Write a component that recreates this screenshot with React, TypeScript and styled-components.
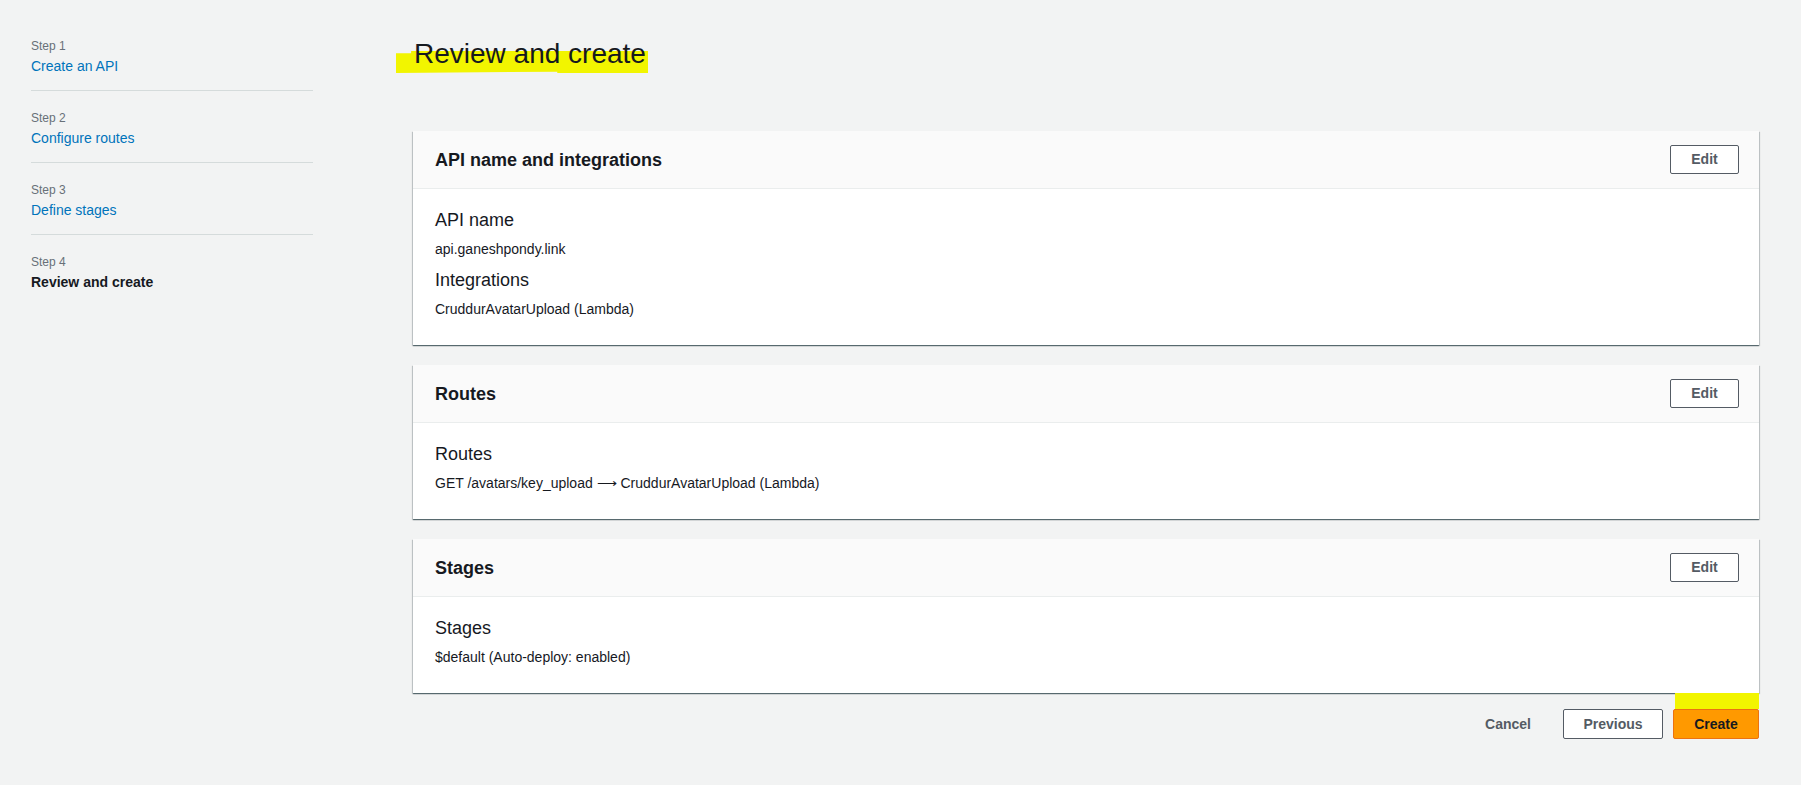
import styled, { createGlobalStyle } from 'styled-components';

const GlobalStyle = createGlobalStyle`
    html, body {
        margin: 0;
        padding: 0;
        background: #f2f3f3;
        font-family: "Liberation Sans", Arial, sans-serif;
        color: #16191f;
    }
`;

interface Step {
    label: string
    title: string
    current?: boolean
}

interface Field {
    label: string
    value: string
}

interface Section {
    title: string
    fields: Field[]
}

const steps: Step[] = [
    { label: 'Step 1', title: 'Create an API' },
    { label: 'Step 2', title: 'Configure routes' },
    { label: 'Step 3', title: 'Define stages' },
    { label: 'Step 4', title: 'Review and create', current: true },
];

const sections: Section[] = [
    {
        title: 'API name and integrations',
        fields: [
            { label: 'API name', value: 'api.ganeshpondy.link' },
            { label: 'Integrations', value: 'CruddurAvatarUpload (Lambda)' },
        ],
    },
    {
        title: 'Routes',
        fields: [{ label: 'Routes', value: 'GET /avatars/key_upload \u27F6 CruddurAvatarUpload (Lambda)' }],
    },
    {
        title: 'Stages',
        fields: [{ label: 'Stages', value: '$default (Auto-deploy: enabled)' }],
    },
];

const App: React.FC = () => {
    return (
        <Page>
            <GlobalStyle />
            <Sidebar>
                {steps.map(step => (
                    <StepItem key={step.label}>
                        <StepLabel>{step.label}</StepLabel>
                        <StepTitle current={step.current}>{step.title}</StepTitle>
                    </StepItem>
                ))}
            </Sidebar>

            <Main>
                <Heading>
                    <Marker />
                    <HeadingText>Review and create</HeadingText>
                </Heading>

                <Cards>
                    {sections.map(section => (
                        <Card key={section.title}>
                            <CardHeader>
                                <CardTitle>{section.title}</CardTitle>
                                <EditButton>Edit</EditButton>
                            </CardHeader>
                            <CardBody>
                                {section.fields.map(field => (
                                    <FieldBlock key={field.label}>
                                        <FieldLabel>{field.label}</FieldLabel>
                                        <FieldValue>{field.value}</FieldValue>
                                    </FieldBlock>
                                ))}
                            </CardBody>
                        </Card>
                    ))}
                </Cards>

                <Actions>
                    <LinkButton>Cancel</LinkButton>
                    <OutlineButton>Previous</OutlineButton>
                    <PrimaryWrap>
                        <ButtonMarker />
                        <PrimaryButton>Create</PrimaryButton>
                    </PrimaryWrap>
                </Actions>
            </Main>
        </Page>
    )
}

const Page = styled.div`
    display: flex;
    align-items: flex-start;
    min-height: 785px;
`;

const Sidebar = styled.ul`
    list-style: none;
    margin: 0 0 0 31px;
    padding: 19px 0 0;
    width: 282px;
    flex-shrink: 0;
`;

const StepItem = styled.li`
    display: flex;
    flex-direction: column;
    gap: 2px;
    padding: 19px 0 14px;
    border-bottom: 1px solid #d5dbdb;

    &:last-child {
        border-bottom: none;
    }
`;

const StepLabel = styled.span`
    font-size: 12px;
    line-height: 16px;
    color: #687078;
`;

const StepTitle = styled.span<{ current?: boolean }>`
    font-size: 14px;
    line-height: 20px;
    color: ${props => props.current ? '#16191f' : '#0073bb'};
    font-weight: ${props => props.current ? 700 : 400};
`;

const Main = styled.div`
    margin-left: 100px;
    width: 1346px;
    padding-top: 36px;
`;

const Heading = styled.div`
    position: relative;
    display: inline-block;
    margin-left: 1px;
`;

const Marker = styled.div`
    position: absolute;
    left: -18px;
    top: 15px;
    width: 252px;
    height: 22px;
    background: #f2f500;
    clip-path: polygon(0 10%, 6% 10%, 6% 0, 100% 0, 100% 100%, 64% 100%, 64% 94%, 0 100%);
`;

const HeadingText = styled.h1`
    position: relative;
    margin: 0;
    font-size: 28px;
    line-height: 36px;
    font-weight: 400;
    color: #16191f;
`;

const Cards = styled.div`
    display: flex;
    flex-direction: column;
    gap: 20px;
    margin-top: 59px;
`;

const Card = styled.section`
    background: #ffffff;
    box-shadow: 0 1px 1px 0 rgba(0, 28, 36, 0.5), 1px 1px 1px 0 rgba(0, 28, 36, 0.15), -1px 1px 1px 0 rgba(0, 28, 36, 0.15);
`;

const CardHeader = styled.div`
    display: flex;
    align-items: center;
    justify-content: space-between;
    height: 57px;
    padding: 0 20px 0 22px;
    background: #fafafa;
    border-bottom: 1px solid #eaeded;
`;

const CardTitle = styled.h2`
    margin: 0;
    font-size: 18px;
    line-height: 22px;
    font-weight: 700;
    color: #16191f;
`;

const EditButton = styled.button`
    width: 69px;
    height: 29px;
    margin-top: -1px;
    background: #ffffff;
    border: 1px solid #545b64;
    border-radius: 2px;
    font-family: inherit;
    font-size: 14px;
    font-weight: 700;
    color: #545b64;
    cursor: pointer;
`;

const CardBody = styled.div`
    display: flex;
    flex-direction: column;
    gap: 10px;
    padding: 20px 22px 26px;
`;

const FieldBlock = styled.div`
    display: flex;
    flex-direction: column;
    gap: 8px;
`;

const FieldLabel = styled.div`
    font-size: 18px;
    line-height: 22px;
    color: #16191f;
`;

const FieldValue = styled.div`
    font-size: 14px;
    line-height: 20px;
    color: #16191f;
`;

const Actions = styled.div`
    display: flex;
    justify-content: flex-end;
    align-items: center;
    gap: 10px;
    margin-top: 16px;
`;

const LinkButton = styled.button`
    height: 30px;
    padding: 0 20px;
    margin-right: 2px;
    background: none;
    border: none;
    font-family: inherit;
    font-size: 14px;
    font-weight: 700;
    color: #545b64;
    cursor: pointer;
`;

const OutlineButton = styled.button`
    width: 100px;
    height: 30px;
    background: #ffffff;
    border: 1px solid #545b64;
    border-radius: 2px;
    font-family: inherit;
    font-size: 14px;
    font-weight: 700;
    color: #545b64;
    cursor: pointer;
`;

const PrimaryWrap = styled.div`
    position: relative;
`;

const ButtonMarker = styled.div`
    position: absolute;
    left: 2px;
    right: 0;
    top: -16px;
    height: 16px;
    background: #f2f500;
`;

const PrimaryButton = styled.button`
    display: block;
    width: 86px;
    height: 30px;
    background: #ff9900;
    border: 1px solid #ec7211;
    border-radius: 2px;
    font-family: inherit;
    font-size: 14px;
    font-weight: 700;
    color: #16191f;
    cursor: pointer;
`;

export default App
